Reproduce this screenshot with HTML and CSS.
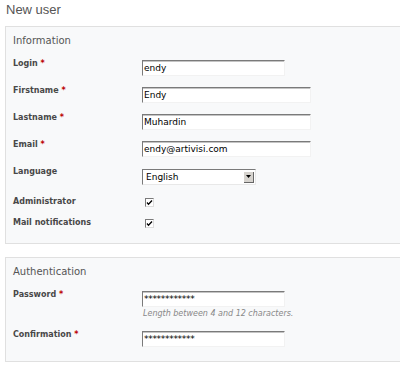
FILE: index.html
```html
<!DOCTYPE html>
<html lang="en">
<head>
    <meta charset="UTF-8">
    <title>New user</title>
    <link rel="stylesheet" href="styles.css">
</head>
<body>

    <div class="page">
        <h2>New user</h2>

        <div class="box">
            <h3>Information</h3>

            <div class="row">
                <label>Login <span class="required">*</span></label>
                <div class="field"><div class="input short">endy</div></div>
            </div>
            <div class="row">
                <label>Firstname <span class="required">*</span></label>
                <div class="field"><div class="input">Endy</div></div>
            </div>
            <div class="row">
                <label>Lastname <span class="required">*</span></label>
                <div class="field"><div class="input">Muhardin</div></div>
            </div>
            <div class="row">
                <label>Email <span class="required">*</span></label>
                <div class="field"><div class="input">endy@artivisi.com</div></div>
            </div>
            <div class="row">
                <label>Language</label>
                <div class="field">
                    <div class="select">
                        <span>English</span>
                        <span class="select-btn">
                            <svg width="5" height="3" viewBox="0 0 5 3"><path d="M0 0h5L2.5 3z" fill="#000"/></svg>
                        </span>
                    </div>
                </div>
            </div>
            <div class="row check-row">
                <label>Administrator</label>
                <div class="field">
                    <span class="checkbox">
                        <svg width="7" height="7" viewBox="0 0 7 7"><path d="M1 3.5l1.5 1.8L6 1.5" fill="none" stroke="#000" stroke-width="1.3"/></svg>
                    </span>
                </div>
            </div>
            <div class="row check-row">
                <label>Mail notifications</label>
                <div class="field">
                    <span class="checkbox">
                        <svg width="7" height="7" viewBox="0 0 7 7"><path d="M1 3.5l1.5 1.8L6 1.5" fill="none" stroke="#000" stroke-width="1.3"/></svg>
                    </span>
                </div>
            </div>
        </div>

        <div class="box">
            <h3>Authentication</h3>

            <div class="row">
                <label>Password <span class="required">*</span></label>
                <div class="field">
                    <div class="input short password">************</div>
                    <em class="hint">Length between 4 and 12 characters.</em>
                </div>
            </div>
            <div class="row">
                <label>Confirmation <span class="required">*</span></label>
                <div class="field"><div class="input short password">************</div></div>
            </div>
        </div>
    </div>

</body>
</html>
```

FILE: styles.css
```css
html, body {
    overflow: hidden;
}

body {
    margin: 0;
    background-color: #fff;
    font-family: 'DejaVu Sans', sans-serif;
    color: #484848;
}

.page {
    padding: 2px 0 0 5px;
}

h2 {
    font-family: 'Liberation Sans', sans-serif;
    font-weight: normal;
    font-size: 13px;
    line-height: 16px;
    color: #555;
    margin: 0 0 8px 1px;
}

.box {
    border: 1px solid #e0e0e0;
    background-color: #f8f9fa;
    padding: 7px 0 14px 7px;
    margin-right: -20px;
    margin-bottom: 13px;
}

.box h3 {
    font-size: 10px;
    font-weight: normal;
    line-height: 14px;
    color: #555;
    margin: 0 0 12px 0;
}

.row {
    display: flex;
    align-items: flex-start;
    margin-bottom: 11px;
}

.row:last-child {
    margin-bottom: 0;
}

.row label {
    width: 129px;
    flex-shrink: 0;
    font-size: 8px;
    font-weight: bold;
    line-height: 12px;
    margin-top: -2px;
    color: #484848;
}

.required {
    color: #bb0000;
}

.input {
    width: 169px;
    height: 16px;
    box-sizing: border-box;
    background-color: #fff;
    border-top: 1px solid #7a7a7a;
    border-left: 1px solid #7a7a7a;
    border-right: 1px solid #f2f2f2;
    border-bottom: 1px solid #f2f2f2;
    box-shadow: inset 0 1px 0 #c4c4c4;
    font-size: 9px;
    line-height: 14px;
    padding-left: 1px;
    color: #000;
}

.input.short {
    width: 143px;
}

.input.password {
    font-size: 9px;
    letter-spacing: -0.3px;
}

.hint {
    display: block;
    font-size: 8px;
    line-height: 12px;
    color: #888;
    margin: 1px 0 0 1px;
}

.select {
    display: flex;
    align-items: center;
    justify-content: space-between;
    width: 114px;
    height: 16px;
    margin-top: 1px;
    box-sizing: border-box;
    background-color: #fff;
    border-top: 1px solid #7a7a7a;
    border-left: 1px solid #7a7a7a;
    border-right: 1px solid #e8e8e8;
    border-bottom: 1px solid #e8e8e8;
    font-size: 9px;
    color: #000;
    padding: 0 1px 0 3px;
}

.select-btn {
    display: flex;
    align-items: center;
    justify-content: center;
    width: 10px;
    height: 11px;
    background-color: #d6d3ce;
    border-right: 1px solid #666;
    border-bottom: 1px solid #666;
    box-sizing: border-box;
}

.check-row {
    margin-bottom: 9px;
}

.check-row label {
    margin-top: 0;
}

.checkbox {
    display: flex;
    align-items: center;
    justify-content: center;
    width: 9px;
    height: 9px;
    box-sizing: border-box;
    margin: 2px 0 0 3px;
    background-color: #fff;
    border-top: 1px solid #7a7a7a;
    border-left: 1px solid #7a7a7a;
    border-right: 1px solid #ddd;
    border-bottom: 1px solid #ddd;
}
```
